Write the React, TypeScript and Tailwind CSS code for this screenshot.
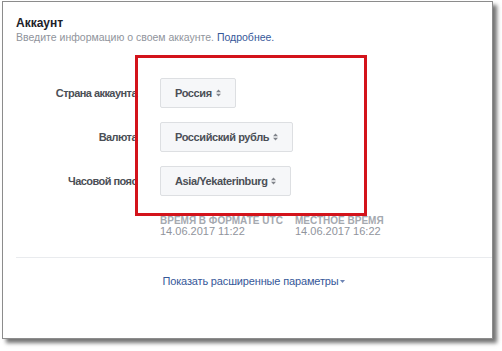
import React from "react";

const font = "font-['Liberation_Sans',Arial,sans-serif]";

const Arrows: React.FC = () => (
  <svg width="5" height="8" viewBox="0 0 5 8" className="ml-[4px] shrink-0">
    <polygon points="0,3.2 2.5,0.5 5,3.2" fill="#7f838a" />
    <polygon points="0,4.8 2.5,7.5 5,4.8" fill="#7f838a" />
  </svg>
);

const SelectRow: React.FC<{ label: string; value: string }> = ({ label, value }) => (
  <div className="flex items-center h-[30px]">
    <div className="w-[134px] text-right text-[11px] font-bold tracking-[-0.55px] text-[#4b4f56] leading-[14px]">
      {label}
    </div>
    <button className="ml-[23px] h-[30px] px-[14px] flex items-center bg-[#f6f7f9] border border-[#dddfe2] rounded-[2px] text-[11px] font-bold tracking-[-0.4px] text-[#4b4f56]">
      {value}
      <Arrows />
    </button>
  </div>
);

const App: React.FC = () => {
  const rows = [
    { label: "Страна аккаунта", value: "Россия" },
    { label: "Валюта", value: "Российский рубль" },
    { label: "Часовой пояс", value: "Asia/Yekaterinburg" },
  ];

  return (
    <div className={`w-[502px] h-[351px] bg-white pt-[1px] pl-[2px] ${font}`}>
      <div className="relative w-[491px] h-[338px] bg-white border border-[#8c8c8c] shadow-[4px_4px_4px_rgba(0,0,0,0.55)]">
        <div className="px-[13px] pt-[15px]">
          <div className="text-[12px] font-bold leading-[13px] text-[#1d2129]">Аккаунт</div>
          <div className="text-[10.5px] leading-[14px] text-[#90949c]">
            Введите информацию о своем аккаунте.{" "}
            <span className="text-[#365899]">Подробнее.</span>
          </div>
        </div>

        <div className="mt-[34px] flex flex-col gap-[14px]">
          {rows.map((r) => (
            <SelectRow key={r.label} label={r.label} value={r.value} />
          ))}
        </div>

        <div className="mt-[19px] pl-[157px] flex">
          <div className="w-[135px]">
            <div className="text-[10px] font-bold leading-[11px] text-[#a5a9b0] uppercase">
              Время в формате UTC
            </div>
            <div className="text-[11px] leading-[11px] text-[#90949c]">14.06.2017 11:22</div>
          </div>
          <div>
            <div className="text-[10px] font-bold leading-[11px] text-[#a5a9b0] uppercase">
              Местное время
            </div>
            <div className="text-[11px] leading-[11px] text-[#90949c]">14.06.2017 16:22</div>
          </div>
        </div>

        <div className="mt-[20px] ml-[13px] h-px bg-[#e9ebee]" />

        <div className="mt-[16px] flex justify-center pl-[12px]">
          <span className="flex items-center text-[11px] tracking-[-0.15px] leading-[14px] text-[#365899]">
            Показать расширенные параметры
            <svg width="5" height="3" viewBox="0 0 5 3" className="ml-[1px] mt-[1px]">
              <polygon points="0,0 5,0 2.5,3" fill="#6d84b4" />
            </svg>
          </span>
        </div>

        <div className="absolute left-[132px] top-[53px] w-[232px] h-[161px] border-[3px] border-[#d3131b]" />
      </div>
    </div>
  );
};

export default App;
